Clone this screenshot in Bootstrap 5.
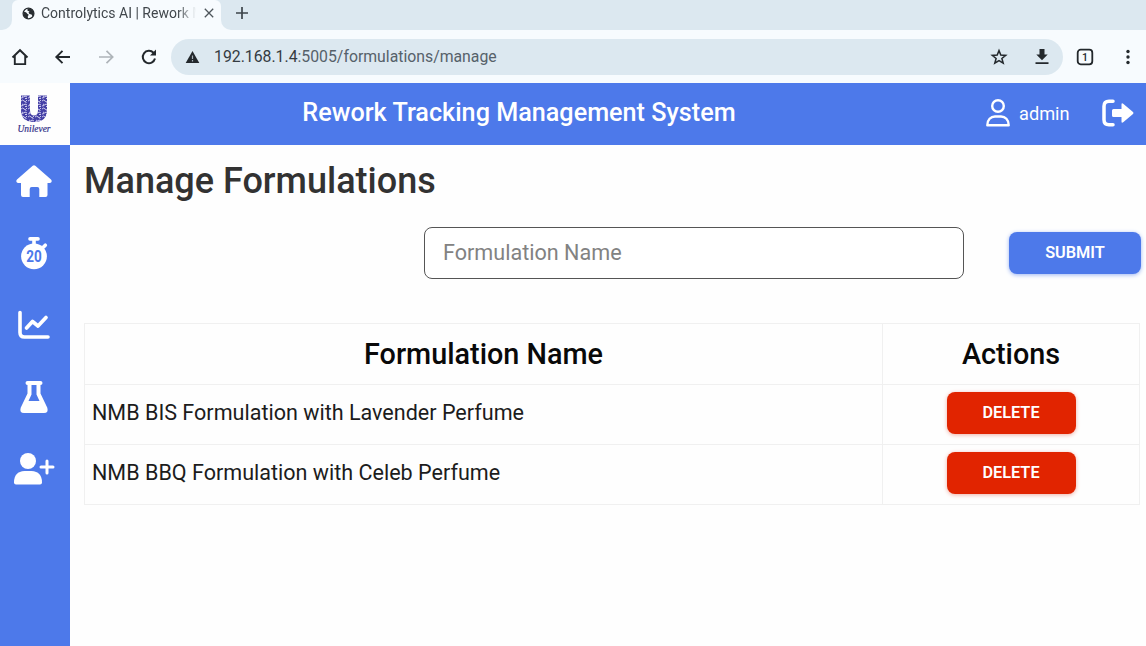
<!DOCTYPE html>
<html lang="en">
<head>
<meta charset="utf-8">
<meta name="viewport" content="width=device-width, initial-scale=1">
<title>Controlytics AI | Rework Management</title>
<link href="https://cdn.jsdelivr.net/npm/bootstrap@5.3.0/dist/css/bootstrap.min.css" rel="stylesheet">
<style>
  :root { --brand: #4d79ea; --strip: #dce8f0; --chrome: #f7fbfe; --ink: #23282c; }
  body { font-family: Roboto, "Liberation Sans", sans-serif; height: 100vh; overflow: hidden; background: #fefefe; }
  svg { display: block; flex: none; }
  .tab-strip { height: 30px; background: var(--strip); }
  .tab-foot { width: 12px; background: var(--chrome); }
  .tab-foot i { display: block; height: 100%; background: var(--strip); }
  .foot-left i { border-bottom-right-radius: 10px; }
  .foot-right i { border-bottom-left-radius: 10px; }
  .page-tab { width: 209px; height: 30px; background: var(--chrome); padding: 0 5px 4px 10px; color: #41474c; }
  .tab-title { width: 155px; margin-left: 6px; font-size: 14px; white-space: nowrap; overflow: hidden; -webkit-mask-image: linear-gradient(90deg, #000 88%, transparent 100%); mask-image: linear-gradient(90deg, #000 88%, transparent 100%); }
  .toolbar { height: 53px; background: var(--chrome); color: var(--ink); padding: 1px 8px 0 10px; }
  .icon-gap { margin-left: 23px; }
  .address { width: 892px; height: 36px; background: var(--strip); padding: 0 11px 0 14px; margin-left: 12px; }
  .url { font-size: 15.8px; color: #56616a; margin-left: 14px; }
  .url span { color: #343b41; }
  .tab-count { margin-left: 13px; }
  .site-header { height: 62px; background: var(--brand); }
  .brand-box { width: 70px; height: 62px; background: #fefefe; }
  .site-title { width: 898px; margin: 0 17px 2px 0; font-size: 25.2px; font-weight: 500; line-height: 1; text-align: center; }
  .user-icon { margin-bottom: 2px; }
  .user-name { width: 50px; margin-left: 8px; font-size: 18.2px; line-height: 1; }
  .exit-icon { margin-left: 32px; margin-bottom: 2px; }
  .side-nav { width: 70px; background: var(--brand); }
  .side-nav a { height: 72px; padding: 0 2px 1px 0; color: #fff; }
  .work { padding: 15px 5px 0 14px; }
  .page-title { font-size: 36px; font-weight: 500; line-height: 42px; color: #323232; margin: 0 0 25px; }
  .name-field { width: 540px; height: 52px; border: 1px solid #555; border-radius: 8px; font-size: 21.6px; padding: 0 18px 1px; background: #fff; }
  .name-field::placeholder { color: #828282; }
  .act { height: 42px; border: 0; border-radius: 8px; color: #fff !important; font-size: 16.3px; font-weight: 600; padding: 0; line-height: 42px; display: block; }
  .act-submit { width: 132px; margin-left: 45px; background: var(--brand) !important; box-shadow: 0 1px 4px #9bb4f3; }
  .act-delete { width: 129px; margin: 0 auto 4px; background: #e12400 !important; box-shadow: 0 1px 4px #efb0a5; }
  .formulas { width: 1056px; table-layout: fixed; margin-top: 44px; --bs-table-bg: transparent; border-color: #f0f0f0; }
  .formulas thead th { height: 61px; padding: 0; vertical-align: middle; font-size: 28.8px; font-weight: 500; color: #090909; text-align: center; line-height: 32px; }
  .formulas td { height: 60px; padding: 0 7px; font-size: 21.55px; color: #1c1c1c; line-height: 32px; }
  .formulas td:first-child { padding-bottom: 3px; }
</style>
</head>
<body class="d-flex flex-column">
  <div class="tab-strip d-flex flex-none">
    <div class="tab-foot foot-left"><i></i></div>
    <div class="page-tab d-flex align-items-center rounded-top">
      <svg width="13" height="13" viewBox="0 0 13 13"><circle cx="6.5" cy="6.5" r="5.400" fill="none" stroke="#282d31" stroke-width="1.300"/><path fill="#282d31" d="M1 4.500l3 .8 1.600 1.700 1.200.8-1 1.500.2 2.400-2-.5-2-2.200zM5.500 1.500l3-.3 3 3 .5 3.500-1.500 1.500-1-1.800-2-.4-1-1.500 1-1-2-.8z"/></svg>
      <div class="tab-title">Controlytics AI | Rework Management</div>
      <svg class="ms-auto" width="14" height="14" viewBox="0 0 14 14" stroke="#4e565c" stroke-width="1.300"><path d="M2.800 2.800l8.400 8.400M11.200 2.800l-8.400 8.400"/></svg>
    </div>
    <div class="tab-foot foot-right"><i></i></div>
    <svg class="mt-1" width="18" height="18" viewBox="0 0 18 18" stroke="#3d444a" stroke-width="1.700"><path d="M9 3v12M3 9h12"/></svg>
  </div>

  <div class="toolbar d-flex align-items-center">
    <svg width="20" height="20" viewBox="0 0 20 20" fill="none" stroke="currentColor" stroke-width="1.900"><path d="M2.500 10.500L10 3.200l7.500 7.300M4.800 8.500v8.600h10.400V8.500"/></svg>
    <svg class="icon-gap" width="20" height="20" viewBox="0 0 20 20" fill="none" stroke="currentColor" stroke-width="1.900"><path d="M17 10H4M9.500 3.800L3.300 10l6.200 6.200"/></svg>
    <svg class="icon-gap" width="20" height="20" viewBox="0 0 20 20" fill="none" stroke="#aeb4b9" stroke-width="1.700"><path d="M3 10h13M10.500 3.800l6.200 6.200-6.200 6.200"/></svg>
    <svg class="icon-gap" width="20" height="20" viewBox="0 0 20 20" fill="none" stroke="currentColor" stroke-width="2"><path d="M16 11.500A6.200 6.200 0 1 1 14.500 5.700L16 7.200"/><path d="M17 2.500v6h-6z" fill="currentColor" stroke="none"/></svg>
    <div class="address d-flex align-items-center rounded-pill">
      <svg width="15" height="14" viewBox="0 0 15 14"><path d="M7.500 1L14.300 13H.7z" fill="#23282c"/><path d="M7.500 5.500v3.500M7.500 10v1.500" stroke="#a9b4bc" stroke-width="1.200"/></svg>
      <div class="url"><span>192.168.1.4</span>:5005/formulations/manage</div>
      <svg class="ms-auto" width="18" height="18" viewBox="0 0 18 18" fill="none" stroke="currentColor" stroke-width="1.500"><path d="M9 2.600l1.800 4.500 4.900.3-3.800 3.100 1.300 4.700L9 12.600l-4.200 2.600 1.300-4.700-3.800-3.100 4.900-.3z"/></svg>
      <svg class="ms-4" width="20" height="20" viewBox="0 0 20 20" fill="currentColor"><path d="M7.500 2h5v5.500h3.200L10 13.300 4.300 7.500h3.200zM3.500 15.200h13V17h-13z"/></svg>
    </div>
    <svg class="tab-count" width="18" height="18" viewBox="0 0 18 18"><rect x="1.700" y="1.700" width="14.600" height="14.600" rx="3" fill="none" stroke="currentColor" stroke-width="1.800"/><text x="9" y="12.800" font-size="10.500" font-weight="500" text-anchor="middle" fill="currentColor">1</text></svg>
    <svg class="ms-auto" width="20" height="20" viewBox="0 0 20 20" fill="currentColor"><circle cx="10" cy="4.500" r="1.700"/><circle cx="10" cy="10" r="1.700"/><circle cx="10" cy="15.500" r="1.700"/></svg>
  </div>

  <header class="site-header d-flex align-items-center text-white">
    <div class="brand-box">
      <svg width="70" height="62" viewBox="0 0 70 62">
        <defs><pattern id="motif" width="7" height="8" patternUnits="userSpaceOnUse"><rect width="7" height="8" fill="#4540a6"/><path d="M0 2q2-2 3 0t3-1M1 5q2 2 3 0l2 1M5 3v1M0 7l2-.5M4 7.500h2" fill="none" stroke="#dddaf5" stroke-width=".9"/></pattern></defs>
        <path d="M21 12.500h9V27q0 5.500 4 5.500t4-5.500V12.500h9V27q0 12-13 12T21 27z" fill="url(#motif)"/>
        <text x="34" y="49" text-anchor="middle" font-family="Liberation Serif, serif" font-size="9.500" font-style="italic" fill="#302f87" stroke="#302f87" stroke-width=".2" textLength="33" lengthAdjust="spacingAndGlyphs">Unilever</text>
      </svg>
    </div>
    <h1 class="site-title">Rework Tracking Management System</h1>
    <svg class="user-icon" width="26" height="30" viewBox="0 0 26 30" fill="none" stroke="#fff" stroke-width="2.400"><circle cx="13" cy="8" r="5.800"/><path d="M2.300 27.200c0-5.500 3.500-8.700 7.700-8.700h6c4.200 0 7.700 3.200 7.700 8.700z" stroke-linejoin="round"/></svg>
    <div class="user-name">admin</div>
    <svg class="exit-icon" width="34" height="30" viewBox="0 0 34 30"><path d="M12 3.300H8q-5 0-5 5v13.400q0 5 5 5h4" fill="none" stroke="#fff" stroke-width="3.500" stroke-linecap="round"/><path d="M12.500 11h8V6.500q0-2 1.700-.8L32 14q1 1 0 2l-9.800 8.300q-1.700 1.200-1.700-.8V19h-8q-1.500 0-1.500-1.500v-5Q11 11 12.500 11z" fill="#fff"/></svg>
  </header>

  <div class="d-flex flex-grow-1">
    <nav class="side-nav">
      <a href="#" class="d-flex align-items-center justify-content-center" aria-label="Home"><svg width="38" height="36" viewBox="0 0 38 36"><path d="M17.700 2.800q1.300-1.200 2.600 0L36 16.500q1.200 1.200.5 2.500-.5 1-2 1h-2v12q0 2-2 2h-6.200v-8q0-2-2-2h-5.600q-2 0-2 2v8H8q-2 0-2-2V20H3.500q-1.500 0-2-1-.7-1.300.5-2.500z" fill="#fff"/></svg></a>
      <a href="#" class="d-flex align-items-center justify-content-center" aria-label="Timer"><svg width="30" height="34" viewBox="0 0 30 34"><path d="M11 2.900h8M15 3v6M24.500 11l1.800-1.800" stroke="#fff" stroke-width="3.600" stroke-linecap="round"/><circle cx="15" cy="20.300" r="12.900" fill="#fff"/><text x="15" y="26.200" text-anchor="middle" font-size="16.500" font-weight="700" fill="#4d79ea" textLength="15.500" lengthAdjust="spacingAndGlyphs">20</text></svg></a>
      <a href="#" class="d-flex align-items-center justify-content-center" aria-label="Reports"><svg width="34" height="30" viewBox="0 0 34 30" fill="none" stroke="#fff" stroke-width="3.600" stroke-linecap="round" stroke-linejoin="round"><path d="M3 2.500v20q0 4.500 4.500 4.500H31"/><path d="M9.500 18l6-6.500 5.500 4.500 8-8.500" stroke-width="3.700"/></svg></a>
      <a href="#" class="d-flex align-items-center justify-content-center" aria-label="Formulations"><svg width="30" height="34" viewBox="0 0 30 34"><path d="M8.500 1h13q2 0 2 2t-2 2v8.500l6.800 14.300Q29.800 33 25 33H5Q.2 33 1.700 27.800L8.500 13.500V5q-2 0-2-2t2-2z" fill="#fff"/><path d="M12.500 5h5v9.500l3 6.500h-11l3-6.500z" fill="#4d79ea"/></svg></a>
      <a href="#" class="d-flex align-items-center justify-content-center" aria-label="Add user"><svg width="42" height="34" viewBox="0 0 42 34"><circle cx="15" cy="9" r="8" fill="#fff"/><path d="M1 30.500q0-11 10.500-11.500h7Q29 19.500 29 30.500q0 2-2 2H3q-2 0-2-2z" fill="#fff"/><path d="M34 9v12M28 15h12" stroke="#fff" stroke-width="3" stroke-linecap="round"/></svg></a>
    </nav>
    <main class="work flex-grow-1">
      <h2 class="page-title">Manage Formulations</h2>
      <form class="d-flex align-items-center justify-content-end">
        <input class="name-field" type="text" placeholder="Formulation Name" aria-label="Formulation Name">
        <button type="button" class="btn act act-submit">SUBMIT</button>
      </form>
      <table class="table table-bordered formulas align-middle mb-0">
        <colgroup><col style="width:798px"><col></colgroup>
        <thead><tr><th>Formulation Name</th><th>Actions</th></tr></thead>
        <tbody>
          <tr><td>NMB BIS Formulation with Lavender Perfume</td><td><button type="button" class="btn act act-delete">DELETE</button></td></tr>
          <tr><td>NMB BBQ Formulation with Celeb Perfume</td><td><button type="button" class="btn act act-delete">DELETE</button></td></tr>
        </tbody>
      </table>
    </main>
  </div>
<script src="https://cdn.jsdelivr.net/npm/bootstrap@5.3.0/dist/js/bootstrap.bundle.min.js"></script>
</body>
</html>
